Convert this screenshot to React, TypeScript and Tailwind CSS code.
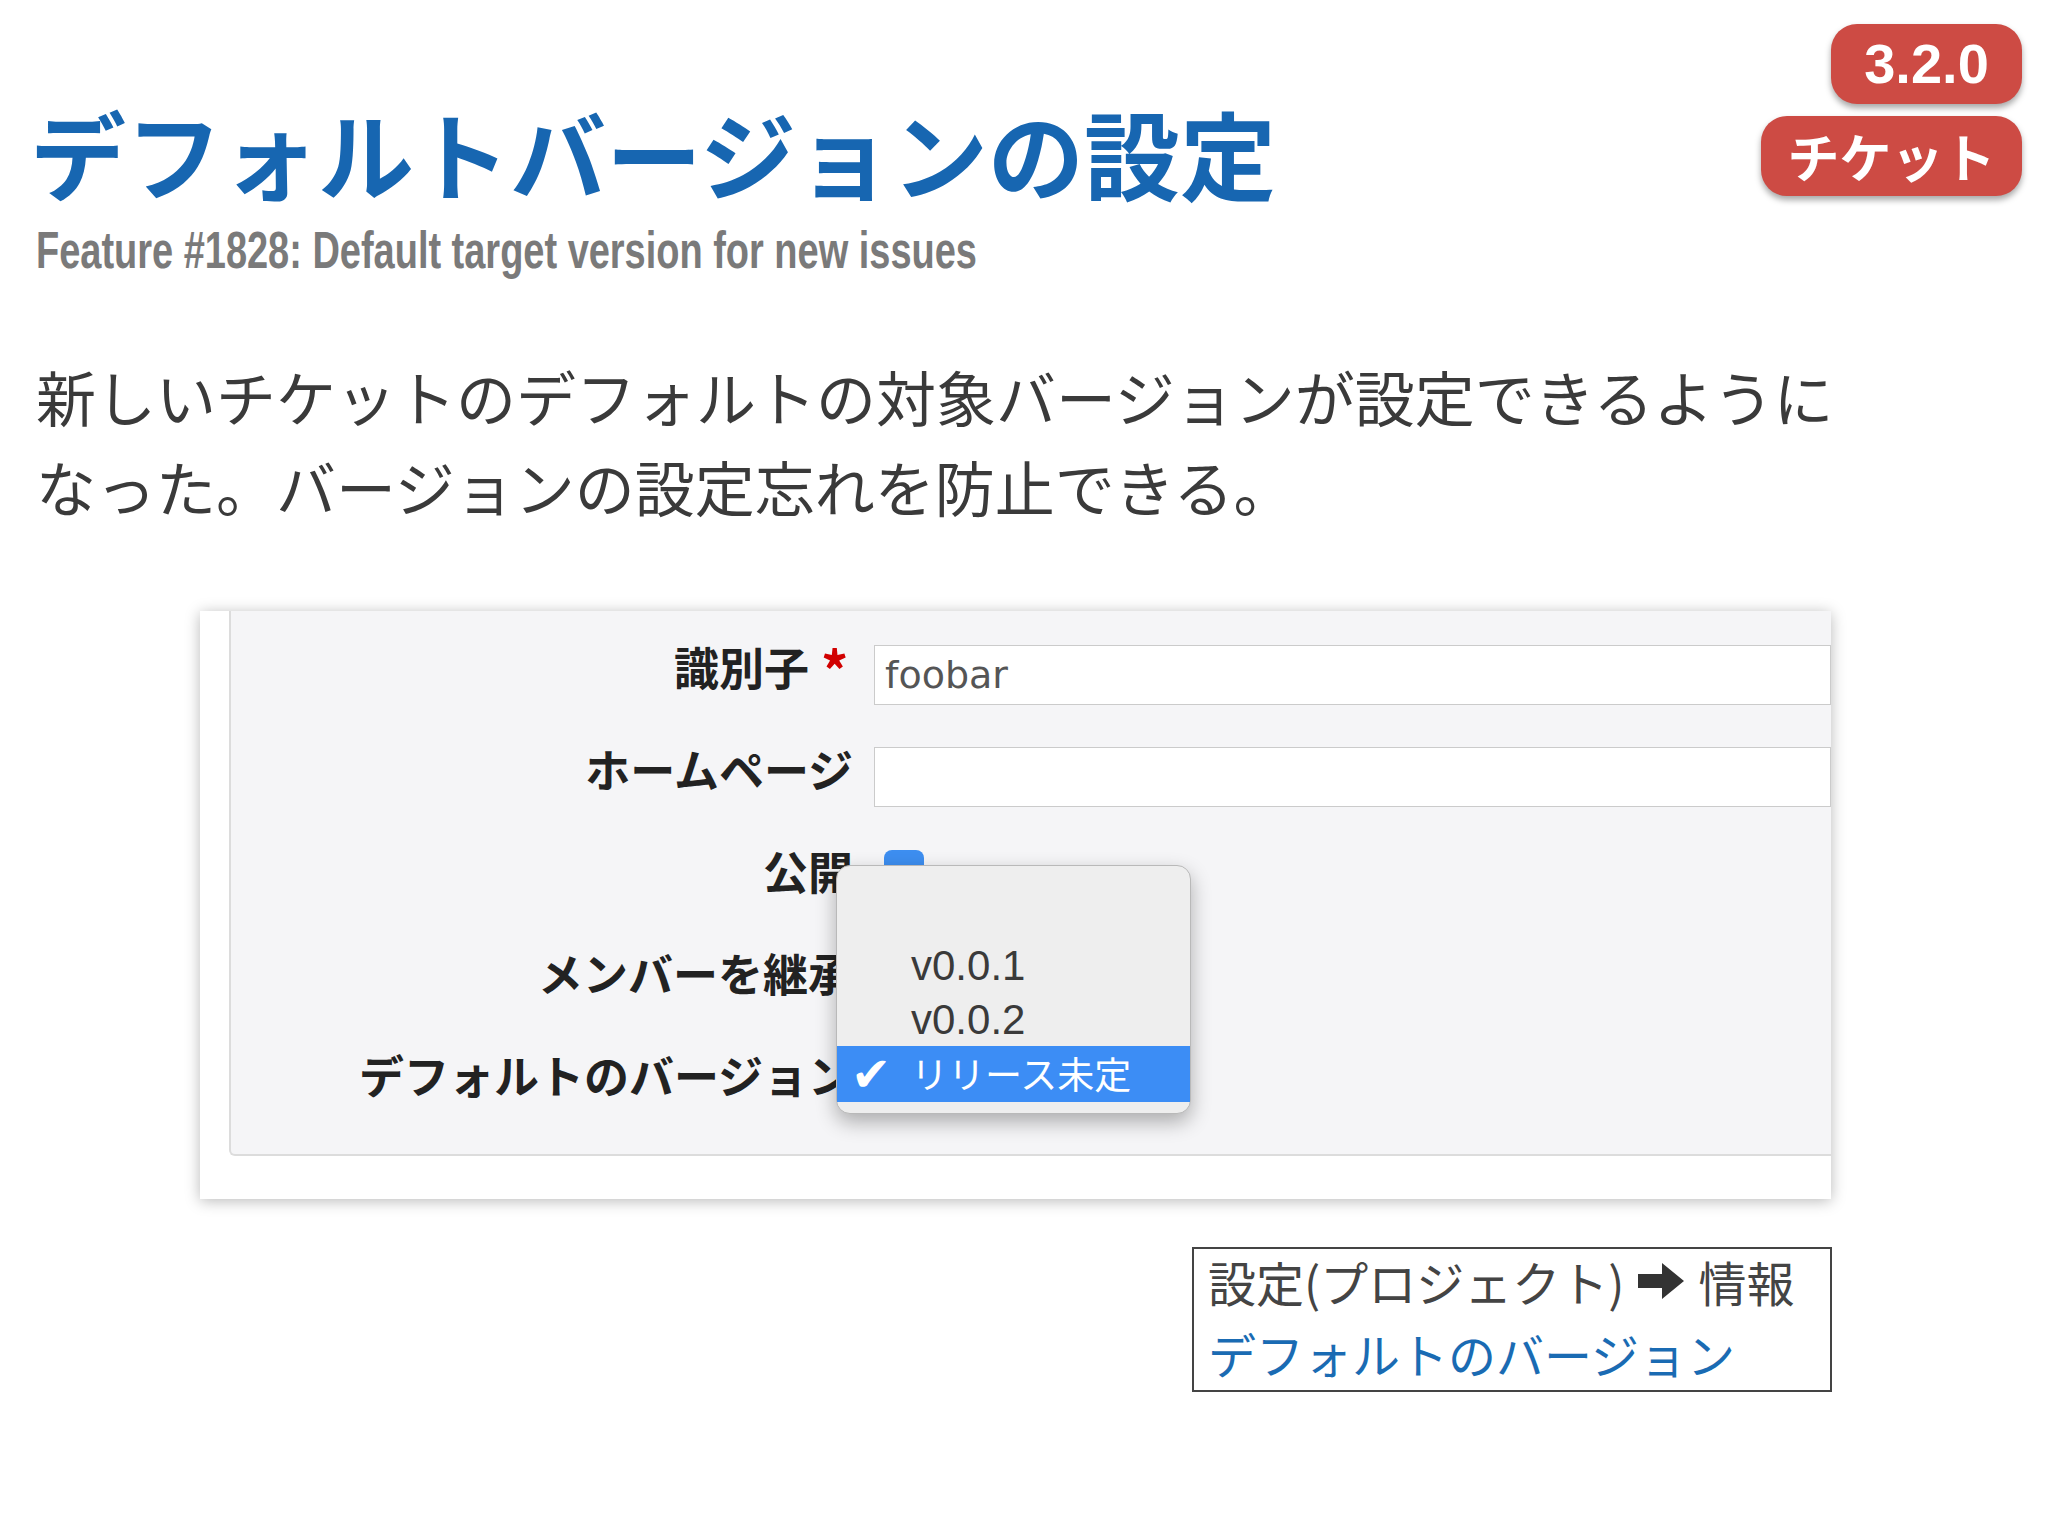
const jp = "font-['Noto_Sans_CJK_JP',sans-serif]";

function Badge({ label, className }: { label: string; className: string }) {
  return (
    <div
      className={`flex h-[80px] items-center justify-center rounded-[26px] bg-[#cd4b44] font-bold text-white shadow-[0_4px_6px_rgba(0,0,0,0.35)] ${className}`}
    >
      {label}
    </div>
  );
}

function Row({ label, required, children }: { label: string; required?: boolean; children?: React.ReactNode }) {
  return (
    <div className="flex h-[102px] items-center">
      <div className="flex w-[622px] shrink-0 items-center justify-end whitespace-nowrap pb-[16px] text-[45px] font-bold text-[#222]">
        {label}
        {required && (
          <span className="ml-[12px] w-[32px] pt-[4px] text-[54px] leading-none text-[#d10000]">*</span>
        )}
      </div>
      <div className="ml-[21px] flex flex-1 items-center">{children}</div>
    </div>
  );
}

function Dropdown() {
  return (
    <div className="absolute left-[636px] top-[254px] z-10 flex h-[249px] w-[355px] flex-col rounded-[14px] border border-[#b9b9b9] bg-[#eeeeee] pt-[18px] shadow-[0_8px_20px_rgba(0,0,0,0.3)]">
      <div className="h-[54px]" />
      <div className="flex h-[54px] items-center pl-[74px] font-['Liberation_Sans',sans-serif] text-[42px] text-[#3a3a3a]">
        v0.0.1
      </div>
      <div className="flex h-[54px] items-center pl-[74px] font-['Liberation_Sans',sans-serif] text-[42px] text-[#3a3a3a]">
        v0.0.2
      </div>
      <div className="flex h-[56px] items-center bg-[#3c8df5] text-white">
        <span className="ml-[14px] w-[60px] font-['DejaVu_Sans',sans-serif] text-[48px] leading-none">✔</span>
        <span className="text-[37px]">リリース未定</span>
      </div>
    </div>
  );
}

export default function App() {
  return (
    <div className={`h-[1536px] w-[2048px] overflow-hidden bg-white ${jp}`}>
      <div className="flex items-start justify-between pr-[26px] pt-[24px]">
        <div className="pl-[30px] pt-[80px]">
          <h1 className="whitespace-nowrap text-[96px] font-bold leading-none text-[#1766b1]">
            デフォルトバージョンの設定
          </h1>
          <div className="mt-[24px] pl-[6px]">
            <span className="inline-block origin-left scale-x-[0.73] whitespace-nowrap font-['Liberation_Sans',sans-serif] text-[52px] font-bold leading-none text-[#7a7a7a]">
              Feature #1828: Default target version for new issues
            </span>
          </div>
        </div>
        <div className="flex flex-col items-end gap-[12px]">
          <Badge label="3.2.0" className="w-[191px] font-['Liberation_Sans',sans-serif] text-[56px]" />
          <Badge label="チケット" className="w-[261px] text-[52px]" />
        </div>
      </div>

      <p className="mt-[75px] pl-[36px] text-[60px] leading-[90px] text-[#3a3a3a]">
        新しいチケットのデフォルトの対象バージョンが設定できるように
        <br />
        なった。バージョンの設定忘れを防止できる。
      </p>

      <div className="relative ml-[200px] mt-[80px] h-[588px] w-[1631px] overflow-hidden bg-white shadow-[0_2px_14px_rgba(0,0,0,0.28)]">
        <div className="ml-[29px] h-[545px] rounded-bl-[6px] border-b-2 border-l-2 border-[#dcdcdc] bg-[#f5f5f7] pt-[13px]">
          <Row label="識別子" required>
            <div className="flex h-[60px] flex-1 items-center border border-[#cbcbcb] bg-white pl-[10px] font-['DejaVu_Sans',sans-serif] text-[38px] text-[#555]">
              foobar
            </div>
          </Row>
          <Row label="ホームページ">
            <div className="h-[60px] flex-1 border border-[#cbcbcb] bg-white" />
          </Row>
          <Row label="公開">
            <div className="-mt-[18px] ml-[10px] h-[40px] w-[40px] rounded-[8px] bg-[#3d8ef0]" />
          </Row>
          <Row label="メンバーを継承" />
          <Row label="デフォルトのバージョン" />
        </div>
        <Dropdown />
      </div>

      <div className="ml-[1192px] mt-[48px] h-[145px] w-[640px] border-2 border-[#444] pl-[14px] text-[48px] leading-[72px]">
        <div className="-mt-[4px]">
          <div className="flex items-center text-[#444]">
            設定(プロジェクト)
            <svg className="mx-[14px] h-[36px] w-[46px]" viewBox="0 0 46 36">
              <path d="M0 11 H24 V0 L46 18 L24 36 V25 H0 Z" fill="#333" />
            </svg>
            情報
          </div>
          <div className="text-[#1a6bb3]">デフォルトのバージョン</div>
        </div>
      </div>
    </div>
  );
}
